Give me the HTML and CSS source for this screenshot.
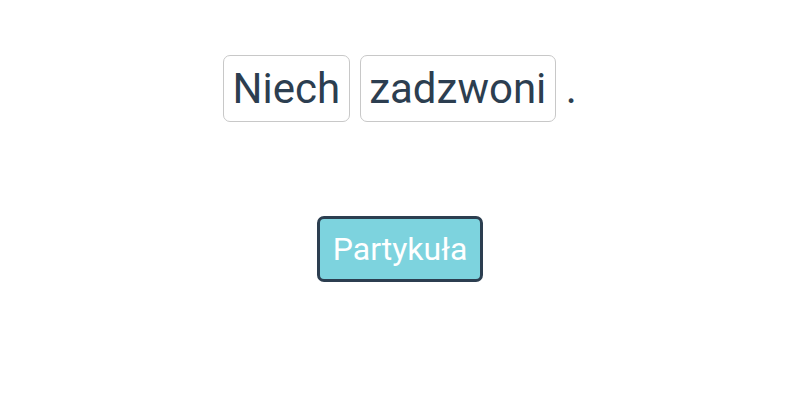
FILE: index.html
```html
<!DOCTYPE html>
<html lang="pl">
<head>
    <meta charset="UTF-8">
    <title>Partykuła</title>
    <link rel="stylesheet" href="styles.css">
</head>
<body>
    <div class="exercise">
        <div class="sentence">
            <span class="word">Niech</span>
            <span class="word">zadzwoni</span>
            <span class="dot">.</span>
        </div>
        <button class="answer">Partykuła</button>
    </div>
</body>
</html>
```

FILE: styles.css
```css
body {
    margin: 0;
    background: #fff;
    font-family: Roboto, "Liberation Sans", sans-serif;
    color: #2c3e50;
}
.exercise {
    display: flex;
    flex-direction: column;
    align-items: center;
    padding-top: 55px;
}
.sentence {
    display: flex;
    align-items: center;
    gap: 10px;
    font-size: 42px;
}
.word {
    display: inline-block;
    padding: 8px 8.5px;
    line-height: 49px;
    border: 1px solid #c8c8c8;
    border-radius: 7px;
}
.answer {
    margin-top: 94px;
    padding: 11px 12.5px;
    font-family: inherit;
    font-size: 32px;
    line-height: 38px;
    color: #fff;
    background: #7dd3de;
    border: 3px solid #2c3e50;
    border-radius: 7px;
    cursor: pointer;
}
```
